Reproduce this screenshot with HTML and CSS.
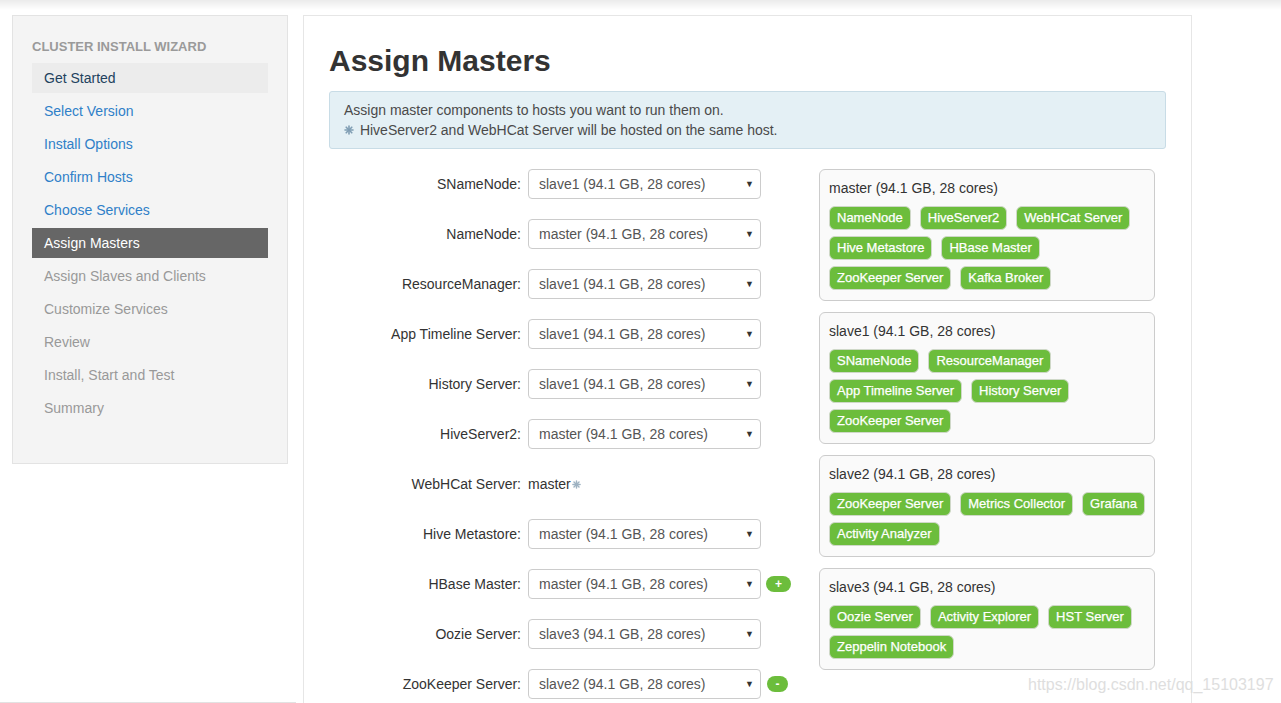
FILE: index.html
```html
<!DOCTYPE html>
<html>
<head>
    <meta charset="UTF-8">
    <title>Assign Masters</title>
    <link rel="stylesheet" href="styles.css">
</head>
<body>
    <div class="top-shade"></div>

    <div class="page">
        <div class="side-col">
            <div class="wizard-nav">
                <div class="nav-header">Cluster Install Wizard</div>
                <ul class="nav-steps">
                    <li class="step done">Get Started</li>
                    <li class="step link">Select Version</li>
                    <li class="step link">Install Options</li>
                    <li class="step link">Confirm Hosts</li>
                    <li class="step link">Choose Services</li>
                    <li class="step active">Assign Masters</li>
                    <li class="step">Assign Slaves and Clients</li>
                    <li class="step">Customize Services</li>
                    <li class="step">Review</li>
                    <li class="step">Install, Start and Test</li>
                    <li class="step">Summary</li>
                </ul>
            </div>
        </div>

        <div class="content">
            <h1>Assign Masters</h1>

            <div class="alert-info">
                <div>Assign master components to hosts you want to run them on.</div>
                <div>
                    <svg class="star" viewBox="0 0 10 10" width="10" height="10">
                        <g stroke="#7f9db3" stroke-width="1.6" stroke-linecap="round">
                            <line x1="5" y1="1" x2="5" y2="9"/>
                            <line x1="1" y1="5" x2="9" y2="5"/>
                            <line x1="2.2" y1="2.2" x2="7.8" y2="7.8"/>
                            <line x1="7.8" y1="2.2" x2="2.2" y2="7.8"/>
                        </g>
                    </svg>
                    HiveServer2 and WebHCat Server will be hosted on the same host.
                </div>
            </div>

            <div class="assign">
                <div class="assign-form">
                    <div class="form-row">
                        <label>SNameNode:</label>
                        <div class="select"><span>slave1 (94.1 GB, 28 cores)</span><span class="caret">&#9660;</span></div>
                    </div>
                    <div class="form-row">
                        <label>NameNode:</label>
                        <div class="select"><span>master (94.1 GB, 28 cores)</span><span class="caret">&#9660;</span></div>
                    </div>
                    <div class="form-row">
                        <label>ResourceManager:</label>
                        <div class="select"><span>slave1 (94.1 GB, 28 cores)</span><span class="caret">&#9660;</span></div>
                    </div>
                    <div class="form-row">
                        <label>App Timeline Server:</label>
                        <div class="select"><span>slave1 (94.1 GB, 28 cores)</span><span class="caret">&#9660;</span></div>
                    </div>
                    <div class="form-row">
                        <label>History Server:</label>
                        <div class="select"><span>slave1 (94.1 GB, 28 cores)</span><span class="caret">&#9660;</span></div>
                    </div>
                    <div class="form-row">
                        <label>HiveServer2:</label>
                        <div class="select"><span>master (94.1 GB, 28 cores)</span><span class="caret">&#9660;</span></div>
                    </div>
                    <div class="form-row">
                        <label>WebHCat Server:</label>
                        <div class="static-host">master<svg class="star" viewBox="0 0 10 10" width="9" height="9">
                            <g stroke="#9fb3c2" stroke-width="1.6" stroke-linecap="round">
                                <line x1="5" y1="1" x2="5" y2="9"/>
                                <line x1="1" y1="5" x2="9" y2="5"/>
                                <line x1="2.2" y1="2.2" x2="7.8" y2="7.8"/>
                                <line x1="7.8" y1="2.2" x2="2.2" y2="7.8"/>
                            </g>
                        </svg></div>
                    </div>
                    <div class="form-row">
                        <label>Hive Metastore:</label>
                        <div class="select"><span>master (94.1 GB, 28 cores)</span><span class="caret">&#9660;</span></div>
                    </div>
                    <div class="form-row">
                        <label>HBase Master:</label>
                        <div class="select"><span>master (94.1 GB, 28 cores)</span><span class="caret">&#9660;</span></div>
                        <span class="pill-btn add">+</span>
                    </div>
                    <div class="form-row">
                        <label>Oozie Server:</label>
                        <div class="select"><span>slave3 (94.1 GB, 28 cores)</span><span class="caret">&#9660;</span></div>
                    </div>
                    <div class="form-row">
                        <label>ZooKeeper Server:</label>
                        <div class="select"><span>slave2 (94.1 GB, 28 cores)</span><span class="caret">&#9660;</span></div>
                        <span class="pill-btn remove">-</span>
                    </div>
                </div>

                <div class="host-list">
                    <div class="host-box">
                        <div class="host-name">master (94.1 GB, 28 cores)</div>
                        <div class="badges">
                            <span class="badge">NameNode</span>
                            <span class="badge">HiveServer2</span>
                            <span class="badge">WebHCat Server</span>
                            <span class="badge">Hive Metastore</span>
                            <span class="badge">HBase Master</span>
                            <span class="badge">ZooKeeper Server</span>
                            <span class="badge">Kafka Broker</span>
                        </div>
                    </div>
                    <div class="host-box">
                        <div class="host-name">slave1 (94.1 GB, 28 cores)</div>
                        <div class="badges">
                            <span class="badge">SNameNode</span>
                            <span class="badge">ResourceManager</span>
                            <span class="badge">App Timeline Server</span>
                            <span class="badge">History Server</span>
                            <span class="badge">ZooKeeper Server</span>
                        </div>
                    </div>
                    <div class="host-box">
                        <div class="host-name">slave2 (94.1 GB, 28 cores)</div>
                        <div class="badges">
                            <span class="badge">ZooKeeper Server</span>
                            <span class="badge">Metrics Collector</span>
                            <span class="badge">Grafana</span>
                            <span class="badge">Activity Analyzer</span>
                        </div>
                    </div>
                    <div class="host-box">
                        <div class="host-name">slave3 (94.1 GB, 28 cores)</div>
                        <div class="badges">
                            <span class="badge">Oozie Server</span>
                            <span class="badge">Activity Explorer</span>
                            <span class="badge">HST Server</span>
                            <span class="badge">Zeppelin Notebook</span>
                        </div>
                    </div>
                </div>
            </div>
        </div>
    </div>

    <div class="watermark">https://blog.csdn.net/qq_15103197</div>
</body>
</html>
```

FILE: styles.css
```css
body {
    margin: 0;
    font-family: "Liberation Sans", Arial, sans-serif;
    font-size: 14px;
    line-height: 20px;
    color: #333;
    background-color: #fff;
}

.top-shade {
    height: 10px;
    background: linear-gradient(#ebebeb, #fff);
}

.page {
    display: flex;
    align-items: flex-start;
    gap: 7px;
    padding: 5px 0 0 12px;
}

/* wizard steps */

.side-col {
    box-sizing: border-box;
    width: 296px;
    margin-left: -12px;
    padding: 0 0 238px 12px;
    border-bottom: 2px solid #e2e2e2;
}

.wizard-nav {
    width: 276px;
    box-sizing: border-box;
    background-color: #f4f4f4;
    border: 1px solid #e3e3e3;
    padding: 21px 19px 37px;
}

.nav-header {
    font-size: 13px;
    font-weight: bold;
    color: #9a9a9a;
    text-transform: uppercase;
    margin-bottom: 6px;
}

.nav-steps {
    list-style: none;
    margin: 0;
    padding: 0;
}

.step {
    height: 30px;
    line-height: 30px;
    padding-left: 12px;
    margin-bottom: 3px;
    color: #999;
}

.step.done {
    background-color: #ececec;
    color: #22425e;
}

.step.link {
    color: #2f80c8;
}

.step.active {
    background-color: #666;
    color: #fff;
}

/* main panel */

.content {
    width: 889px;
    min-height: 720px;
    box-sizing: border-box;
    border: 1px solid #e6e6e6;
    padding: 0 25px;
}

h1 {
    font-size: 30px;
    line-height: 33px;
    font-weight: bold;
    margin: 28px 0 14px;
    color: #333;
}

.alert-info {
    background-color: #e4f0f5;
    border: 1px solid #c8dce6;
    border-radius: 3px;
    padding: 8px 14px;
    color: #4a4a4a;
}

.alert-info .star {
    margin-right: 2px;
}

.star {
    vertical-align: 0;
}

.assign {
    display: flex;
    margin-top: 20px;
}

.assign-form {
    width: 490px;
}

.form-row {
    display: flex;
    align-items: center;
    height: 30px;
    margin-bottom: 20px;
}

.form-row label {
    width: 192px;
    margin-right: 7px;
    text-align: right;
}

.select {
    width: 233px;
    height: 30px;
    box-sizing: border-box;
    border: 1px solid #ccc;
    border-radius: 4px;
    padding: 0 6px 0 10px;
    display: flex;
    align-items: center;
    justify-content: space-between;
    color: #555;
}

.caret {
    font-size: 9px;
    color: #333;
}

.static-host .star {
    margin-left: 1px;
}

.pill-btn {
    margin-left: 5px;
    height: 16px;
    line-height: 16px;
    border-radius: 8px;
    background-color: #6cbd3c;
    color: #fff;
    font-size: 12px;
    font-weight: bold;
    text-align: center;
}

.pill-btn.add {
    width: 25px;
}

.pill-btn.remove {
    width: 21px;
    margin-left: 6px;
}

/* hosts */

.host-list {
    width: 336px;
}

.host-box {
    background-color: #fafafa;
    border: 1px solid #ccc;
    border-radius: 6px;
    padding: 8px 4px 10px 9px;
    margin-bottom: 11px;
}

.host-name {
    margin-bottom: 8px;
}

.badges {
    display: flex;
    flex-wrap: wrap;
    gap: 6px 9px;
}

.badge {
    height: 24px;
    line-height: 22px;
    box-sizing: border-box;
    padding: 0 7px;
    border: 1px solid #cfd8c8;
    border-radius: 6px;
    background-color: #6cbd3c;
    color: #fff;
    font-size: 13px;
    -webkit-text-stroke: 0.25px #fff;
}

.watermark {
    position: absolute;
    top: 675px;
    left: 1028px;
    font-size: 16px;
    color: #dedede;
}
```
